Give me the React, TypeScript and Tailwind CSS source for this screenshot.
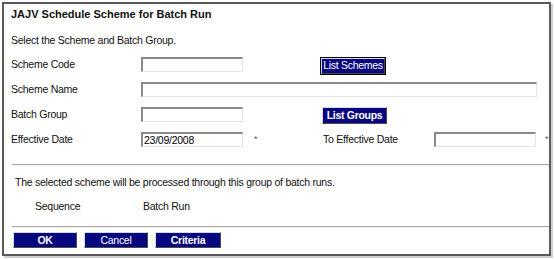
import React from "react";

const font = { fontFamily: '"Liberation Sans", Arial, sans-serif' };

function Input({ w, value }: { w: string; value?: string }) {
  return (
    <div
      className={`${w} h-[15px] bg-white border-t-2 border-l-2 border-r border-b border-t-[#8a8a8a] border-l-[#8a8a8a] border-r-[#e4e4e4] border-b-[#e4e4e4] flex items-center pl-[1px] text-[10.5px] text-black leading-none`}
    >
      {value}
    </div>
  );
}

function NavyButton({
  w,
  label,
  bold,
  focused,
  h = "h-[17px]",
}: {
  w: string;
  label: string;
  bold?: boolean;
  focused?: boolean;
  h?: string;
}) {
  return (
    <div className={`${focused ? "border border-black" : ""}`}>
      <div
        className={`${w} ${h} bg-[#06067e] text-white flex items-center justify-center border border-t-[#d8d8e8] border-l-[#d8d8e8] border-r-[#4a4a4a] border-b-[#4a4a4a] text-[10.5px] tracking-[-0.3px] leading-none ${bold ? "font-bold" : ""}`}
      >
        {label}
      </div>
    </div>
  );
}

export default function App() {
  return (
    <div className="w-[554px] h-[259px] bg-white pl-[2px] pt-[2px]" style={font}>
      <div className="w-[549px] h-[254px] border-2 border-[#5a5a5a] shadow-[2px_2px_0_#d0d0d0] flex flex-col text-[10.5px] tracking-[-0.25px] text-[#111]">
        <div className="h-[21px] flex items-center pl-[7px] font-bold text-[11px] tracking-normal">
          JAJV Schedule Scheme for Batch Run
        </div>
        <div className="h-[27px] flex items-center pl-[7px] pt-[4px]">
          Select the Scheme and Batch Group.
        </div>

        <div className="h-[25px] flex items-center pl-[7px]">
          <div className="w-[130px]">Scheme Code</div>
          <Input w="w-[102px]" />
          <div className="ml-[77px] mt-[2px]">
            <NavyButton w="w-[64px]" h="h-[16px]" label="List Schemes" focused />
          </div>
        </div>

        <div className="h-[25px] flex items-center pl-[7px]">
          <div className="w-[130px]">Scheme Name</div>
          <Input w="w-[396px]" />
        </div>

        <div className="h-[25px] flex items-center pl-[7px]">
          <div className="w-[130px]">Batch Group</div>
          <Input w="w-[102px]" />
          <div className="ml-[79px] mt-[1px]">
            <NavyButton w="w-[65px]" label="List Groups" bold />
          </div>
        </div>

        <div className="h-[25px] flex items-center pl-[7px]">
          <div className="w-[130px]">Effective Date</div>
          <Input w="w-[102px]" value="23/09/2008" />
          <div className="w-[80px] pl-[11px] text-[9px] text-[#555]">*</div>
          <div className="w-[111px]">To Effective Date</div>
          <Input w="w-[102px]" />
          <div className="pl-[9px] text-[9px] text-[#555]">*</div>
        </div>

        <div className="mt-[12px] ml-[8px] h-[2px] border-t border-t-[#a8a8a8] border-b border-b-[#f0f0f0]" />

        <div className="h-[33px] flex items-center pl-[11px]">
          The selected scheme will be processed through this group of batch runs.
        </div>

        <div className="h-[16px] flex items-center">
          <div className="w-[139px] pl-[31px]">Sequence</div>
          <div>Batch Run</div>
        </div>

        <div className="mt-[11px] ml-[8px] h-[2px] border-t border-t-[#a8a8a8] border-b border-b-[#f0f0f0]" />

        <div className="mt-[4px] flex pl-[9px] gap-[7px]">
          <NavyButton w="w-[64px]" h="h-[16px]" label="OK" bold />
          <NavyButton w="w-[64px]" h="h-[16px]" label="Cancel" />
          <NavyButton w="w-[66px]" h="h-[16px]" label="Criteria" bold />
        </div>
      </div>
    </div>
  );
}
